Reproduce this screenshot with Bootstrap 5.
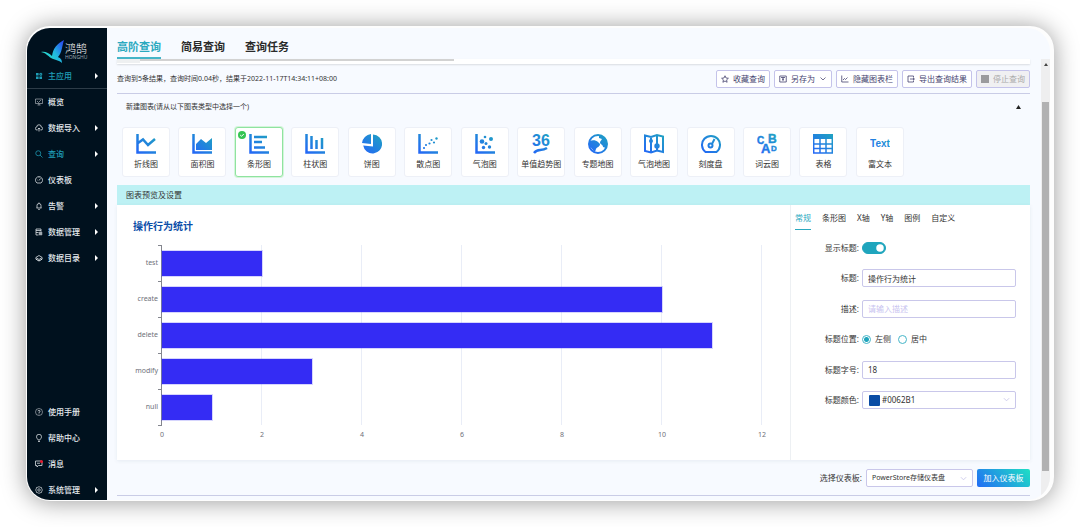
<!DOCTYPE html>
<html lang="zh-CN">
<head>
<meta charset="utf-8">
<meta name="viewport" content="width=device-width, initial-scale=1">
<title>鸿鹄 - 高阶查询</title>
<link href="https://cdn.jsdelivr.net/npm/bootstrap@5.3.0/dist/css/bootstrap.min.css" rel="stylesheet">
<style>
  body { font-family: "Noto Sans", "Noto Sans CJK SC", sans-serif; font-size: 8px; line-height: 12px; color: #333; background: #fff; padding: 26px; }
  a { text-decoration: none; color: inherit; }
  svg { display: block; flex: none; }
  .window { min-height: calc(100vh - 52px); padding: 2px 4px 1px 1px; border-radius: 24px; background: #fdfdfd; box-shadow: 0 1px 24px rgba(0,0,0,.4); overflow: hidden; }
  .window-inner { border-radius: 23px; overflow: hidden; background: #f7faff; }
  .fine { font-size: 7px; }
  /* sidebar */
  .side { width: 80px; flex: none; background: #00111e; color: #e6ebef; }
  .side-bottom { margin-bottom: -3px; }
  .brand { height: 34px; margin-top: 6px; padding-left: 14px; }
  .brand-name { font-size: 11px; line-height: 12px; color: #fff; font-weight: 300; }
  .brand-sub { font-size: 5px; line-height: 5px; color: #9aa5ae; }
  .side-link { height: 26px; padding: 0 9px 0 8px; gap: 5px; font-weight: 500; }
  .side-link svg { width: 8px; height: 8px; fill: none; stroke: currentColor; stroke-width: 1; }
  .side-link .caret { width: 3px; height: 6px; fill: #fff; stroke: none; margin-left: auto; }
  .side-link.active { color: #1f9fb8; }
  .side-app { border-bottom: 1px solid #2d3c48; height: 21px; padding-bottom: 5px; }
  /* header */
  .head { height: 31px; padding: 11px 0 0 10px; gap: 20px; }
  .head a { font-size: 11px; line-height: 16px; height: 20px; font-weight: 700; color: #2a2a2a; }
  .head a.active { color: #2ba9bf; border-bottom: 2px solid #45b5c8; }
  .main { padding: 0 11px 4px 10px; }
  .sliver { height: 5px; background: #fff; box-shadow: 0 1px 2px rgba(0,0,0,.12); }
  .sliver-gutter { width: 23px; height: 4px; background: #eef0f1; }
  .sliver-bar { width: 314px; height: 2px; background: #d2d2d2; }
  .rule { height: 1px; background: #c9cce6; }
  .tool { font-size: 8px; line-height: 12px; height: 18px; padding: 0 4px; border: 1px solid #c4c3ea; border-radius: 2px; background: #fff; color: #45436f; display: flex; align-items: center; gap: 4px; white-space: nowrap; }
  .tool svg { width: 8px; height: 8px; fill: none; stroke: currentColor; }
  .tool:disabled { background: #f0f0f2; color: #aaa; border-color: #c4c3ea; opacity: 1; }
  .results { height: 29px; }
  .collapse-head { height: 25px; padding: 0 9px; }
  .kinds { max-width: 792px; padding: 8px 5px; }
  .kind { width: 48px; height: 50px; padding: 5px 0 0; border: 1px solid #edf0f7; border-radius: 3px; background: #fff; font-size: 8px; line-height: 12px; color: #333; display: flex; flex-direction: column; align-items: center; gap: 3px; white-space: nowrap; }
  .kind.active { border-color: #8fe3a0; box-shadow: 0 0 0 1px #d4f5da; }
  .kind svg { width: 20px; height: 22px; }
  .kind .tick { position: absolute; left: 2px; top: 3px; width: 8px; height: 8px; }
  .banner { height: 20px; padding: 0 9px; background: #bdf1f4; }
  .panel { background: #fff; min-height: 255px; box-shadow: 0 1px 4px rgba(30,60,90,.08); }
  /* chart */
  .plot-wrap { padding: 14px 28px 18px 16px; min-width: 0; }
  .plot-title { font-size: 10px; line-height: 14px; font-weight: 700; color: #0b4da8; margin: 0; }
  .plot { margin-top: 12px; }
  .cats { width: 25px; font-size: 7px; color: #6e7079; }
  .cats div { height: 36px; display: flex; align-items: center; justify-content: flex-end; }
  .axis { width: 4px; height: 181px; border-right: 1px solid #84868e; background: repeating-linear-gradient(#84868e 0 1px, transparent 1px 36px); }
  .bars { height: 180px; background: repeating-linear-gradient(90deg, transparent 0 calc(100% / 6 - 1px), #e9edf7 calc(100% / 6 - 1px) calc(100% / 6)); }
  .band { height: 36px; display: flex; align-items: center; }
  .band div { height: 25px; background: #342cf4; box-shadow: 0 0 0 1px rgba(52,44,244,.2); }
  .ticks { padding: 3px 0 0 22px; margin-right: -7px; font-size: 7px; color: #6e7079; }
  .ticks span { width: 14px; text-align: center; }
  /* settings */
  .settings { width: 240px; flex: none; border-left: 1px solid #edf0f3; padding: 5px 14px 51px 4px; }
  .settings-tabs { gap: 11px; margin-bottom: 9px; }
  .settings-tabs a { height: 20px; line-height: 15px; }
  .settings-tabs a.active { color: #2ba9bf; border-bottom: 1px solid #2ba9bf; }
  .field { height: 18px; gap: 3px; }
  .field > label, .field > .caption { width: 64px; flex: none; text-align: right; white-space: nowrap; }
  .box { height: 18px; min-height: 0; padding: 0 5px; font-size: 8px; line-height: 12px; border: 1px solid #c9c7ea; border-radius: 2px; color: #333; background-color: #fff; }
  .box::placeholder { color: #c8c3f0; }
  select.box { background-size: 7px 7px; background-position: right 5px center; background-image: url("data:image/svg+xml,%3csvg xmlns='http://www.w3.org/2000/svg' viewBox='0 0 16 16'%3e%3cpath fill='none' stroke='%23c9c7ea' stroke-width='2' d='m2 5 6 6 6-6'/%3e%3c/svg%3e"); }
  select.color-box { padding-left: 19px; }
  .swatch { position: absolute; left: 7px; top: 4px; width: 11px; height: 11px; background: #0a4ca5; border-radius: 1px; }
  .switch-input.form-check-input { width: 24px; height: 12px; margin: 0; background-color: #1fa5bd; border-color: #1fa5bd; }
  .dot.form-check-input { width: 9px; height: 9px; margin: 0; border: 1px solid #45b5c8; background: #fff; }
  .dot.form-check-input:checked { background: radial-gradient(#1fa5bd 0 2px, #fff 3px); }
  .pick label { margin: 0 7px 0 4px; }
  .foot { padding-top: 9px; margin-bottom: 8px; gap: 4px; }
  select.dash-select { width: 107px; font-size: 7px; }
  .join { height: 18px; width: 53px; padding: 0; font-size: 8px; line-height: 12px; border: 0; border-radius: 2px; color: #fff; background: linear-gradient(45deg, #226cf5, #1fe0c4); white-space: nowrap; }
  .rail { width: 9px; flex: none; background: #eeeeef; padding: 0 1px; }
  .rail-up { height: 43px; padding: 4px 2px; }
  .rail-thumb { flex: 1; background: #b1b1b2; }
  .rail-end { height: 29px; }
</style>
</head>
<body>
<svg width="0" height="0" class="position-absolute" aria-hidden="true">
  <defs>
    <linearGradient id="g" gradientUnits="userSpaceOnUse" x1="2" y1="20" x2="18" y2="2"><stop offset="0" stop-color="#2468f6"/><stop offset="1" stop-color="#1f9fc4"/></linearGradient>
    <linearGradient id="b" gradientUnits="userSpaceOnUse" x1="2" y1="18" x2="22" y2="4"><stop offset="0" stop-color="#28e0c8"/><stop offset=".5" stop-color="#22b9e0"/><stop offset="1" stop-color="#2a4ff0"/></linearGradient>
    <symbol id="caret" viewBox="0 0 3 6"><path d="M0 0l3 3-3 3z"/></symbol>
  </defs>
</svg>
<div class="window d-flex">
 <div class="window-inner d-flex flex-grow-1">
  <nav class="side d-flex flex-column" aria-label="主导航">
    <div class="brand d-flex align-items-center">
      <svg width="24" height="24" viewBox="0 0 24 24"><path fill="url(#b)" d="M0 13c4-1 8 1 11 4 1-8 5-12 12-16-2 6-2 13-6 17 2 1 4 2 4 6-3-3-7-3-11-5-3-2-5-5-10-6z"/></svg>
      <div><div class="brand-name">鸿鹄</div><div class="brand-sub">HONGHU</div></div>
    </div>
    <a href="#" class="side-link side-app active d-flex align-items-center"><svg viewBox="0 0 8 8"><path fill="currentColor" stroke="none" d="M1 1h2.600v2.600H1zM1 4.400h2.600V7H1zM4.400 4.400H7V7H4.400z"/><path d="M4.900 1.400h1.800v1.800H4.900z"/></svg>主应用<svg class="caret"><use href="#caret"/></svg></a>
    <a href="#" class="side-link d-flex align-items-center"><svg viewBox="0 0 16 16"><path d="M1 2h14v9H1zM5 14h6M8 11v3M4 6l3 3 5-5"/></svg>概览</a>
    <a href="#" class="side-link d-flex align-items-center"><svg viewBox="0 0 16 16"><path d="M5 12H4a3 3 0 0 1-.500-6 4.500 4.500 0 0 1 9 0A3 3 0 0 1 12 12h-1M8 15V8M5.500 10.500L8 8l2.500 2.500" stroke-width="1.500"/></svg>数据导入<svg class="caret"><use href="#caret"/></svg></a>
    <a href="#" class="side-link active d-flex align-items-center"><svg viewBox="0 0 16 16"><circle cx="6.500" cy="6.500" r="5" stroke-width="1.500"/><path d="M10 10l5 5" stroke-width="1.500"/></svg>查询<svg class="caret"><use href="#caret"/></svg></a>
    <a href="#" class="side-link d-flex align-items-center"><svg viewBox="0 0 16 16"><path d="M4 14a7 7 0 1 1 8 0zM8 9l3-4M4 8h1M8 3v1" stroke-width="1.500"/></svg>仪表板</a>
    <a href="#" class="side-link d-flex align-items-center"><svg viewBox="0 0 16 16"><path d="M3 12h10M4 12V7a4 4 0 0 1 8 0v5M8 1v2M6.500 15h3" stroke-width="1.500"/></svg>告警<svg class="caret"><use href="#caret"/></svg></a>
    <a href="#" class="side-link d-flex align-items-center"><svg viewBox="0 0 16 16"><path d="M7 14H2V2h10v5M2 5h10M2 9h5" stroke-width="1.500"/><path fill="currentColor" d="M8 8h6v6H8z" opacity=".7"/></svg>数据管理<svg class="caret"><use href="#caret"/></svg></a>
    <a href="#" class="side-link d-flex align-items-center"><svg viewBox="0 0 16 16"><path d="M8 3l6.500 4L8 11 1.500 7z" stroke-width="1.500"/><path d="M1.500 9v1L8 14l6.500-4V9" stroke-width="2"/></svg>数据目录<svg class="caret"><use href="#caret"/></svg></a>
    <div class="side-bottom mt-auto">
      <a href="#" class="side-link d-flex align-items-center"><svg viewBox="0 0 16 16"><circle cx="8" cy="8" r="7"/><path d="M6 6.500a2 2 0 1 1 2 2.200V10M8 11v1.500" stroke-width="1.500"/></svg>使用手册</a>
      <a href="#" class="side-link d-flex align-items-center"><svg viewBox="0 0 16 16"><path d="M6 12c0-2-3-3-3-6.500a5 5 0 0 1 10 0C13 9 10 10 10 12zM6 15h4" stroke-width="1.500"/></svg>帮助中心</a>
      <a href="#" class="side-link d-flex align-items-center"><svg viewBox="0 0 16 16"><path d="M1 2h13v9H7l-3 3v-3H1zM4 6.500h6" stroke-width="1.500"/><circle cx="13" cy="3" r="3" fill="#e5182d" stroke="none"/></svg>消息</a>
      <a href="#" class="side-link d-flex align-items-center"><svg viewBox="0 0 16 16"><path d="M8 1l2 1.500 3 .500.500 3L15 8l-1.500 2-.500 3-3 .500L8 15l-2-1.500L3 13l-.500-3L1 8l1.500-2L3 3l3-.500z" stroke-width="1.300"/><circle cx="8" cy="8" r="2.500" stroke-width="1.300"/></svg>系统管理<svg class="caret"><use href="#caret"/></svg></a>
    </div>
  </nav>

  <div class="flex-grow-1 d-flex flex-column">
    <nav class="head d-flex" aria-label="查询方式">
      <a href="#" class="active">高阶查询</a><a href="#">简易查询</a><a href="#">查询任务</a>
    </nav>
    <div class="d-flex flex-grow-1">
      <main class="main flex-grow-1">
        <div class="sliver d-flex"><div class="sliver-gutter"></div><div class="sliver-bar"></div></div>
        <div class="results d-flex align-items-center">
          <span class="fine me-auto">查询到5条结果，查询时间0.04秒，结果于2022-11-17T14:34:11+08:00</span>
          <div class="d-flex gap-1">
            <button class="tool" type="button"><svg viewBox="0 0 16 16"><path d="M8 1.500l2 4.500 4.800.500-3.600 3.200 1 4.800L8 12l-4.200 2.500 1-4.800L1.200 6.500 6 6z" stroke-width="1.600"/></svg>收藏查询</button>
            <button class="tool" type="button"><svg viewBox="0 0 16 16"><path d="M1.500 2h13v12h-13zM4 5h8M8 5v7M6 8.500h4" stroke-width="1.600"/></svg>另存为<svg viewBox="0 0 16 16"><path d="M3 5l5 5 5-5" stroke-width="1.500"/></svg></button>
            <button class="tool" type="button"><svg viewBox="0 0 16 16"><path d="M1.500 1v13H15M4 10l3-3 2 2 4-4" stroke-width="1.600"/></svg>隐藏图表栏</button>
            <button class="tool" type="button"><svg viewBox="0 0 16 16"><path d="M13 5V2H2v12h11v-3M6 8h9M12 6l2.500 2L12 10" stroke-width="1.600"/></svg>导出查询结果</button>
            <button class="tool" type="button" disabled><svg viewBox="0 0 8 8"><path d="M0 0h8v8H0z" fill="#9b9b9d" stroke="none"/></svg>停止查询</button>
          </div>
        </div>
        <div class="rule"></div>
        <div class="collapse-head d-flex align-items-center justify-content-between"><span class="fine">新建图表(请从以下图表类型中选择一个)</span><svg width="5" height="4" viewBox="0 0 5 4"><path d="M2.500 0L5 4H0z" fill="#222"/></svg></div>
        <div class="kinds d-flex justify-content-between">
          <button type="button" class="kind"><svg viewBox="0 0 20 22"><path d="M1.500 1v18.500H20M2 10l5-3.500 5 5.500 7-6" fill="none" stroke="url(#g)" stroke-width="2.500"/></svg>折线图</button>
          <button type="button" class="kind"><svg viewBox="0 0 20 22"><path d="M1.500 1v18.500H20" fill="none" stroke="url(#g)" stroke-width="2.500"/><path fill="url(#g)" d="M4 11l5-5 5 4 6-5v12H4z"/></svg>面积图</button>
          <button type="button" class="kind active position-relative"><svg class="tick" viewBox="0 0 8 8"><circle cx="4" cy="4" r="4" fill="#35c553"/><path d="M2.200 4l1.300 1.300 2.300-2.300" stroke="#fff" fill="none"/></svg><svg viewBox="0 0 20 22"><path d="M1.500 1v18.500H20M5 4h13M5 9h8M5 14.500h11" fill="none" stroke="url(#g)" stroke-width="2.500"/></svg>条形图</button>
          <button type="button" class="kind"><svg viewBox="0 0 20 22"><path d="M1.500 1v18.500H20M6.500 3v13M11.500 7v9M17 5v11" fill="none" stroke="url(#g)" stroke-width="2.500"/></svg>柱状图</button>
          <button type="button" class="kind"><svg viewBox="0 0 20 22"><path fill="url(#g)" d="M11 1.500A9.500 9.500 0 1 1 1.200 12.500L11 13.500zM9 1v10L0 10A10 10 0 0 1 9 1z"/></svg>饼图</button>
          <button type="button" class="kind"><svg viewBox="0 0 20 22"><path d="M1.500 1v18.500H20" fill="none" stroke="url(#g)" stroke-width="2.500"/><g fill="url(#g)"><circle cx="6" cy="15" r="1.100"/><circle cx="8" cy="12" r="1.100"/><circle cx="11.500" cy="10.500" r="1.100"/><circle cx="13.500" cy="7" r="1.100"/><circle cx="16" cy="9.500" r="1.100"/><circle cx="18.500" cy="5.500" r="1.200"/></g></svg>散点图</button>
          <button type="button" class="kind"><svg viewBox="0 0 20 22"><path d="M1.500 1v18.500H20" fill="none" stroke="url(#g)" stroke-width="2.500"/><g fill="url(#g)"><circle cx="7" cy="8.500" r="2.300"/><circle cx="10" cy="4" r="1.300"/><circle cx="16" cy="6" r="2"/><circle cx="11" cy="10.500" r="1.500"/><circle cx="8.500" cy="14.500" r="1.700"/><circle cx="14.500" cy="14" r="1.700"/></g></svg>气泡图</button>
          <button type="button" class="kind"><svg viewBox="0 0 20 22"><text x="10" y="13" text-anchor="middle" font-family="Liberation Sans" font-weight="700" font-size="16" fill="url(#g)">36</text><path d="M3 20c4-5 7-1 13-5" fill="none" stroke="url(#g)" stroke-width="2.500"/></svg>单值趋势图</button>
          <button type="button" class="kind"><svg viewBox="0 0 20 22"><circle cx="10" cy="11" r="9" fill="none" stroke="url(#g)" stroke-width="2"/><path fill="url(#g)" d="M2 8c2-1 6-1 8 1l2 2c0 3-3 3-4 5l-1 3c-2-1-3-4-5-5zM11 2c3 0 6 2 8 6l-1 7-3-1c0-3-3-2-3-5l2-3-3-1z"/></svg>专题地图</button>
          <button type="button" class="kind"><svg viewBox="0 0 20 22"><path d="M1 2.500l6 1.500 6-2 6 1.500V19l-6-1.500-6 2L1 18zM7 4v15M13 2v15" fill="none" stroke="url(#g)" stroke-width="2"/><circle cx="7" cy="8" r="2" fill="url(#g)"/><circle cx="13" cy="13" r="2.700" fill="url(#g)"/></svg>气泡地图</button>
          <button type="button" class="kind"><svg viewBox="0 0 20 22"><path d="M4.500 19a9 9 0 1 1 11 0z" fill="none" stroke="url(#g)" stroke-width="2"/><circle cx="9.500" cy="12.500" r="2" fill="none" stroke="url(#g)" stroke-width="2"/><path d="M11 11l2.500-5" stroke="url(#g)" stroke-width="2"/></svg>刻度盘</button>
          <button type="button" class="kind"><svg viewBox="0 0 20 22" font-family="Liberation Sans" font-weight="700" fill="url(#g)" stroke="url(#g)" stroke-width=".4"><text x="0" y="11" font-size="10">C</text><text x="11" y="10" font-size="12">B</text><text x="4" y="20" font-size="13">A</text><text x="14" y="18" font-size="8">D</text></svg>词云图</button>
          <button type="button" class="kind"><svg viewBox="0 0 20 22"><path fill="url(#g)" d="M0 1h20v5H0z"/><path d="M.700 2v18h18.600V2M0 11h20M0 15.500h20M7 6v14M13 6v14" fill="none" stroke="url(#g)" stroke-width="1.500"/></svg>表格</button>
          <button type="button" class="kind"><svg viewBox="0 0 20 22"><text x="10" y="14" text-anchor="middle" font-family="Liberation Sans" font-weight="700" font-size="10" fill="url(#g)">Text</text></svg>富文本</button>
        </div>
        <div class="banner d-flex align-items-center">图表预览及设置</div>
        <div class="panel d-flex">
          <section class="plot-wrap flex-grow-1">
            <h2 class="plot-title">操作行为统计</h2>
            <div class="plot d-flex">
              <div class="cats"><div>test</div><div>create</div><div>delete</div><div>modify</div><div>null</div></div>
              <div class="axis"></div>
              <div class="bars flex-grow-1">
                <div class="band"><div style="width:16.67%"></div></div>
                <div class="band"><div style="width:83.33%"></div></div>
                <div class="band"><div style="width:91.67%"></div></div>
                <div class="band"><div style="width:25%"></div></div>
                <div class="band"><div style="width:8.33%"></div></div>
              </div>
            </div>
            <div class="ticks d-flex justify-content-between"><span>0</span><span>2</span><span>4</span><span>6</span><span>8</span><span>10</span><span>12</span></div>
          </section>
          <section class="settings d-flex flex-column">
            <nav class="settings-tabs d-flex" aria-label="图表设置"><a href="#" class="active">常规</a><a href="#">条形图</a><a href="#">X轴</a><a href="#">Y轴</a><a href="#">图例</a><a href="#">自定义</a></nav>
            <form class="d-flex flex-column justify-content-between flex-grow-1">
              <div class="field d-flex align-items-center"><label for="show">显示标题:</label><div class="form-switch p-0 d-flex"><input class="form-check-input switch-input" type="checkbox" role="switch" id="show" checked></div></div>
              <div class="field d-flex align-items-center"><label for="title">标题:</label><input class="form-control box" id="title" type="text" value="操作行为统计"></div>
              <div class="field d-flex align-items-center"><label for="desc">描述:</label><input class="form-control box" id="desc" type="text" placeholder="请输入描述"></div>
              <div class="field pick d-flex align-items-center"><span class="caption">标题位置:</span><div class="d-flex align-items-center"><input class="form-check-input dot" type="radio" name="pos" id="left" checked><label for="left">左侧</label><input class="form-check-input dot" type="radio" name="pos" id="mid"><label for="mid">居中</label></div></div>
              <div class="field d-flex align-items-center"><label for="size">标题字号:</label><input class="form-control box" id="size" type="text" value="18"></div>
              <div class="field d-flex align-items-center"><label for="color">标题颜色:</label><div class="position-relative flex-grow-1"><select class="form-select box color-box" id="color"><option>#0062B1</option></select><span class="swatch"></span></div></div>
            </form>
          </section>
        </div>
        <div class="foot d-flex align-items-center justify-content-end">
          <label for="dash">选择仪表板:</label>
          <select class="form-select box dash-select" id="dash"><option>PowerStore存储仪表盘</option></select>
          <button class="join" type="button">加入仪表板</button>
        </div>
        <div class="rule"></div>
      </main>
      <div class="rail d-flex flex-column" aria-hidden="true"><div class="rail-up"><svg width="4" height="3" viewBox="0 0 4 3"><path d="M2 0l2 3H0z" fill="#444"/></svg></div><div class="rail-thumb"></div><div class="rail-end"></div></div>
    </div>
  </div>
 </div>
</div>
<script src="https://cdn.jsdelivr.net/npm/bootstrap@5.3.0/dist/js/bootstrap.bundle.min.js"></script>
</body>
</html>
